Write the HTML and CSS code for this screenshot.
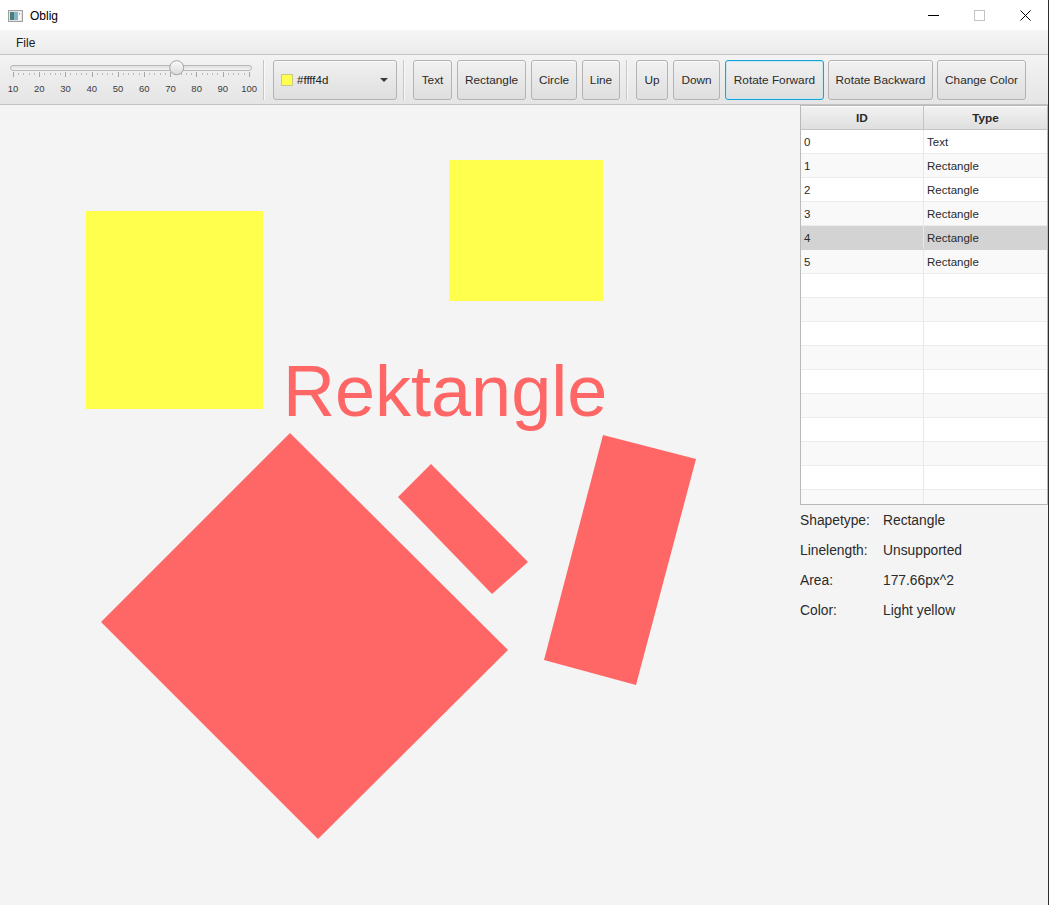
FILE: index.html
```html
<!DOCTYPE html>
<html lang="en">
<head>
<meta charset="utf-8">
<title>Oblig</title>
<link rel="stylesheet" href="styles.css">
</head>
<body>
<div class="window">
  <div class="titlebar">
    <svg class="app-icon" width="15" height="12" viewBox="0 0 15 12">
      <rect x="0.5" y="0.5" width="14" height="11" fill="#e4e4e4" stroke="#a0a0a0"/>
      <rect x="2" y="2" width="4" height="8" fill="#4a7f78"/>
      <rect x="6" y="2" width="4" height="8" fill="#86b4c6"/>
      <rect x="10" y="2" width="3" height="8" fill="#f6f6f6"/>
      <rect x="11" y="3" width="1" height="2" fill="#9ab"/>
    </svg>
    <span class="title">Oblig</span>
    <div class="win-controls">
      <div class="win-btn">
        <svg width="11" height="11" viewBox="0 0 11 11"><path d="M0 5.5h11" stroke="#000" stroke-width="1"/></svg>
      </div>
      <div class="win-btn">
        <svg width="11" height="11" viewBox="0 0 11 11"><rect x="0.5" y="0.5" width="10" height="10" fill="none" stroke="#c4c4c4"/></svg>
      </div>
      <div class="win-btn">
        <svg width="11" height="11" viewBox="0 0 11 11"><path d="M0.5 0.5L10.5 10.5M10.5 0.5L0.5 10.5" stroke="#000" stroke-width="1"/></svg>
      </div>
    </div>
  </div>

  <div class="menubar"><span class="menu-item">File</span></div>

  <div class="toolbar">
    <div class="slider">
      <svg class="slider-graphic" width="262" height="20" viewBox="0 0 262 20">
        <defs>
          <linearGradient id="thumbGrad" x1="0" y1="0" x2="0" y2="1">
            <stop offset="0" stop-color="#fbfbfb"/>
            <stop offset="1" stop-color="#dadada"/>
          </linearGradient>
          <linearGradient id="trackGrad" x1="0" y1="0" x2="0" y2="1">
            <stop offset="0" stop-color="#dcdcdc"/>
            <stop offset="1" stop-color="#f6f6f6"/>
          </linearGradient>
        </defs>
        <rect x="10.5" y="5.5" width="241" height="5" rx="2.5" fill="url(#trackGrad)" stroke="#b9b9b9"/>
        <path d="M13.5 12v5M39.5 12v5M65.5 12v5M92.5 12v5M118.5 12v5M144.5 12v5M170.5 12v5M196.5 12v5M223.5 12v5M249.5 12v5" stroke="#a6a6a6" stroke-width="1"/>
        <path d="M18.5 13v2M23.5 13v2M29.5 13v2M34.5 13v2M44.5 13v2M50.5 13v2M55.5 13v2M60.5 13v2M70.5 13v2M76.5 13v2M81.5 13v2M86.5 13v2M97.5 13v2M102.5 13v2M107.5 13v2M112.5 13v2M123.5 13v2M128.5 13v2M133.5 13v2M139.5 13v2M149.5 13v2M154.5 13v2M160.5 13v2M165.5 13v2M175.5 13v2M181.5 13v2M186.5 13v2M191.5 13v2M202.5 13v2M207.5 13v2M212.5 13v2M217.5 13v2M228.5 13v2M233.5 13v2M238.5 13v2M244.5 13v2" stroke="#b8b8b8" stroke-width="1"/>
        <circle cx="176.7" cy="7.7" r="7" fill="url(#thumbGrad)" stroke="#a3a3a3"/>
      </svg>
      <div class="slider-labels">
        <span>10</span><span>20</span><span>30</span><span>40</span><span>50</span><span>60</span><span>70</span><span>80</span><span>90</span><span>100</span>
      </div>
    </div>
    <div class="sep sep-slider"></div>
    <div class="color-picker">
      <span class="swatch"></span>
      <span class="picker-text">#ffff4d</span>
      <svg class="picker-arrow" width="8" height="4" viewBox="0 0 8 4"><path d="M0 0h8L4 4z" fill="#3a3a3a"/></svg>
    </div>
    <div class="sep sep-picker"></div>
    <button class="btn btn-first btn-text">Text</button>
    <button class="btn btn-rect">Rectangle</button>
    <button class="btn btn-circle">Circle</button>
    <button class="btn btn-line">Line</button>
    <div class="sep sep-group"></div>
    <button class="btn btn-first btn-up">Up</button>
    <button class="btn btn-down">Down</button>
    <button class="btn btn-focused btn-rf">Rotate Forward</button>
    <button class="btn btn-tight btn-rb">Rotate Backward</button>
    <button class="btn btn-tight btn-cc">Change Color</button>
  </div>

  <div class="main">
    <div class="canvas">
      <svg class="drawing" width="800" height="800" viewBox="0 0 800 800">
        <rect x="86" y="106" width="177" height="198" class="shape-yellow"/>
        <rect x="449" y="55" width="154" height="141" class="shape-yellow"/>
        <text x="283" y="311" class="shape-text">Rektangle</text>
        <polygon points="290,328 508,545 318,734 101,517" class="shape-red"/>
        <polygon points="431,359 528,457 492,489 398,392" class="shape-red"/>
        <polygon points="603,330 696,354 636,580 544,555" class="shape-red"/>
      </svg>
    </div>
    <div class="side">
      <div class="table">
        <div class="thead">
          <div class="th th-id">ID</div>
          <div class="th th-type">Type</div>
        </div>
        <div class="row"><div class="cell cell-id">0</div><div class="cell">Text</div></div>
        <div class="row row-odd"><div class="cell cell-id">1</div><div class="cell">Rectangle</div></div>
        <div class="row"><div class="cell cell-id">2</div><div class="cell">Rectangle</div></div>
        <div class="row row-odd"><div class="cell cell-id">3</div><div class="cell">Rectangle</div></div>
        <div class="row row-selected"><div class="cell cell-id">4</div><div class="cell">Rectangle</div></div>
        <div class="row row-odd"><div class="cell cell-id">5</div><div class="cell">Rectangle</div></div>
        <div class="row"><div class="cell cell-id"></div><div class="cell"></div></div>
        <div class="row row-odd"><div class="cell cell-id"></div><div class="cell"></div></div>
        <div class="row"><div class="cell cell-id"></div><div class="cell"></div></div>
        <div class="row row-odd"><div class="cell cell-id"></div><div class="cell"></div></div>
        <div class="row"><div class="cell cell-id"></div><div class="cell"></div></div>
        <div class="row row-odd"><div class="cell cell-id"></div><div class="cell"></div></div>
        <div class="row"><div class="cell cell-id"></div><div class="cell"></div></div>
        <div class="row row-odd"><div class="cell cell-id"></div><div class="cell"></div></div>
        <div class="row"><div class="cell cell-id"></div><div class="cell"></div></div>
        <div class="row row-odd"><div class="cell cell-id"></div><div class="cell"></div></div>
      </div>
      <div class="info">
        <div class="info-row"><span class="info-label">Shapetype:</span><span class="info-value">Rectangle</span></div>
        <div class="info-row"><span class="info-label">Linelength:</span><span class="info-value">Unsupported</span></div>
        <div class="info-row"><span class="info-label">Area:</span><span class="info-value">177.66px^2</span></div>
        <div class="info-row"><span class="info-label">Color:</span><span class="info-value">Light yellow</span></div>
      </div>
    </div>
  </div>
</div>
</body>
</html>
```

FILE: styles.css
```css
* { box-sizing: border-box; }

body {
  margin: 0;
  width: 1049px;
  height: 905px;
  overflow: hidden;
  background: #f4f4f4;
  font-family: "Liberation Sans", Arial, sans-serif;
  color: #333;
}

.window {
  width: 1049px;
  height: 905px;
  border-right: 1px solid #2e2e2e;
  display: flex;
  flex-direction: column;
}

/* title bar */
.titlebar {
  flex: none;
  height: 30px;
  background: #fff;
  display: flex;
  align-items: center;
}
.app-icon { display: block; margin-left: 8px; margin-top: 1px; }
.title { margin-left: 7px; margin-top: 1px; font-size: 12px; color: #000; }
.win-controls { margin-left: auto; display: flex; height: 30px; }
.win-btn {
  width: 46px;
  height: 30px;
  display: flex;
  align-items: center;
  justify-content: center;
}
.win-btn svg { display: block; }

/* menu bar */
.menubar {
  flex: none;
  height: 25px;
  padding-top: 1px;
  border-bottom: 1px solid #c6c6c6;
  background: linear-gradient(#f6f6f6, #ebebeb);
  display: flex;
  align-items: center;
}
.menu-item { margin-left: 16px; font-size: 12px; color: #222; }

/* tool bar */
.toolbar {
  flex: none;
  height: 50px;
  padding-top: 5px;
  border-bottom: 1px solid #c2c2c2;
  background: linear-gradient(#f3f3f3, #e5e5e5);
  display: flex;
  align-items: flex-start;
}

.slider { width: 262px; flex: none; }
.slider-graphic { display: block; }
.slider-labels {
  display: flex;
  width: 262.2px;
  margin-top: 2px;
  font-size: 9.5px;
  line-height: 13px;
  color: #3c3c3c;
}
.slider-labels span { flex: 1; text-align: center; }

.sep {
  flex: none;
  width: 2px;
  height: 40px;
  border-left: 1px solid #c6c6c6;
  border-right: 1px solid #f9f9f9;
}
.sep-slider { margin-left: 1px; }
.sep-picker { margin-left: 6px; }
.sep-group { margin-left: 6px; }

.color-picker {
  flex: none;
  margin-left: 8px;
  width: 124px;
  height: 40px;
  border: 1px solid #b3b3b3;
  border-radius: 3px;
  background: linear-gradient(#f1f1f1, #dedede);
  box-shadow: inset 0 1px 0 #fbfbfb;
  display: flex;
  align-items: center;
  padding: 0 7px;
}
.swatch {
  width: 12px;
  height: 12px;
  background: #ffff4d;
  border: 1px solid #c9c98a;
}
.picker-text { margin-left: 4px; font-size: 11.5px; color: #222; }
.picker-arrow { display: block; margin-left: auto; margin-right: 1px; }

.btn {
  flex: none;
  height: 40px;
  margin-left: 5px;
  padding: 0;
  border: 1px solid #b3b3b3;
  border-radius: 3px;
  background: linear-gradient(#f1f1f1, #dedede);
  box-shadow: inset 0 1px 0 #fbfbfb;
  font-family: "Liberation Sans", Arial, sans-serif;
  font-size: 11.8px;
  color: #2a2a2a;
  white-space: nowrap;
  text-align: center;
}
.btn-first { margin-left: 8px; }
.btn-tight { margin-left: 4px; }
.btn-text { width: 39px; }
.btn-rect { width: 69px; }
.btn-circle { width: 46px; }
.btn-line { width: 38px; }
.btn-up { width: 32px; }
.btn-down { width: 47px; }
.btn-rf { width: 99px; }
.btn-rb { width: 105px; }
.btn-cc { width: 89px; }
.btn-focused {
  border-color: #1aa3d6;
  box-shadow: inset 0 0 0 1px #c8e7f3;
}

/* main area */
.main { flex: 1; display: flex; min-height: 0; }
.canvas { width: 800px; height: 800px; flex: none; background: #f4f4f4; }
.drawing { display: block; }
.shape-yellow { fill: #ffff4d; }
.shape-red { fill: #ff6666; }
.shape-text {
  fill: #ff6666;
  font-family: "Liberation Sans", Arial, sans-serif;
  font-size: 72px;
}

.side { width: 248px; flex: none; }

.table {
  height: 400px;
  border: 1px solid #b9b9b9;
  background: #fff;
  overflow: hidden;
}
.thead {
  display: flex;
  height: 24px;
  border-bottom: 1px solid #c4c4c4;
  background: linear-gradient(#f2f2f2, #dfdfdf);
  box-shadow: inset 0 1px 0 #fdfdfd;
}
.th {
  display: flex;
  align-items: center;
  justify-content: center;
  font-size: 11.8px;
  font-weight: bold;
  color: #2a2a2a;
}
.th-id { width: 123px; border-right: 1px solid #c4c4c4; }
.th-type { flex: 1; }

.row {
  display: flex;
  height: 24px;
  border-bottom: 1px solid #ececec;
  background: #fff;
}
.row-odd { background: #f9f9f9; }
.row-selected { background: #d3d3d3; border-bottom-color: #d3d3d3; }
.cell {
  flex: 1;
  display: flex;
  align-items: center;
  padding-left: 3px;
  font-size: 11.5px;
  color: #2a2a2a;
}
.cell-id { flex: none; width: 123px; border-right: 1px solid #e8e8e8; }

.info-row {
  height: 30px;
  display: flex;
  align-items: center;
  font-size: 13.8px;
  color: #2a2a2a;
}
.info-label { width: 83px; }
```
